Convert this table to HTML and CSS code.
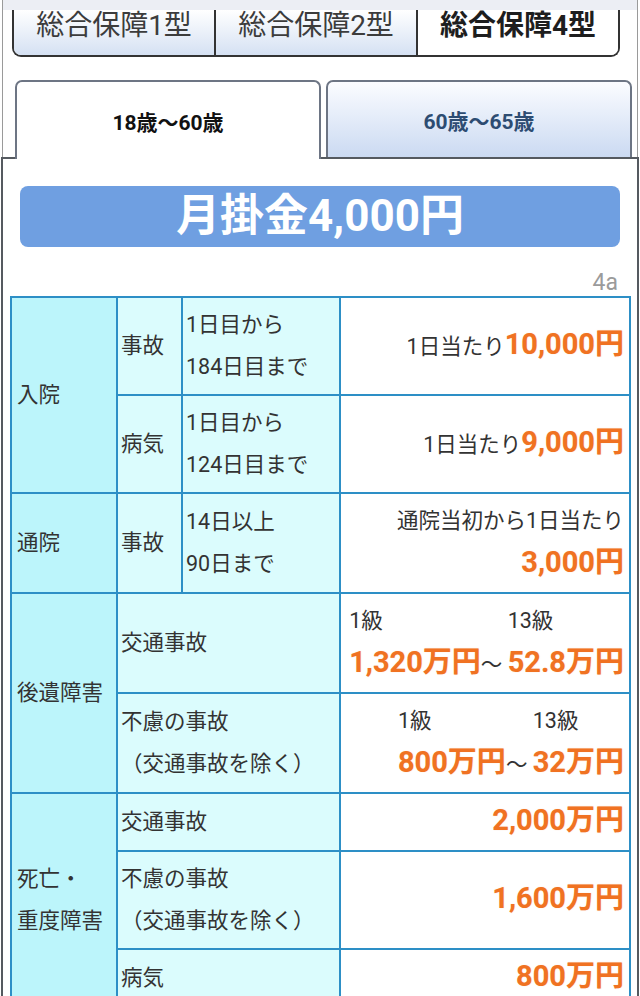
FILE: index.html
```html
<!DOCTYPE html>
<html lang="ja">
<head>
<meta charset="utf-8">
<title>総合保障4型</title>
<link rel="stylesheet" href="styles.css">
</head>
<body>
<div class="page">
  <div class="head">
    <div class="band"></div>
    <div class="plans">
      <div class="plan first">総合保障1型</div>
      <div class="plan">総合保障2型</div>
      <div class="plan on last">総合保障4型</div>
    </div>
    <div class="ages">
      <div class="age on">18歳～60歳</div>
      <div class="age">60歳～65歳</div>
    </div>
  </div>
  <div class="panel">
    <div class="banner">月掛金4,000円</div>
    <div class="code">4a</div>
    <table class="cover">
      <colgroup>
        <col class="c1"><col class="c2"><col class="c3"><col class="c4">
      </colgroup>
      <tr>
        <td class="k1" rowspan="2">入院</td>
        <td class="k2">事故</td>
        <td class="k2">1日目から<br>184日目まで</td>
        <td class="v">1日当たり<b>10,000円</b></td>
      </tr>
      <tr>
        <td class="k2">病気</td>
        <td class="k2">1日目から<br>124日目まで</td>
        <td class="v">1日当たり<b>9,000円</b></td>
      </tr>
      <tr>
        <td class="k1">通院</td>
        <td class="k2">事故</td>
        <td class="k2">14日以上<br>90日まで</td>
        <td class="v">通院当初から1日当たり<br><b>3,000円</b></td>
      </tr>
      <tr>
        <td class="k1" rowspan="2">後遺障害</td>
        <td class="k2" colspan="2">交通事故</td>
        <td class="v"><span class="g"><span class="lbl">1級</span><br><b>1,320万円</b></span>～&nbsp;<span class="g"><span class="lbl">13級</span><br><b>52.8万円</b></span></td>
      </tr>
      <tr>
        <td class="k2" colspan="2">不慮の事故<br>（交通事故を除く）</td>
        <td class="v"><span class="g"><span class="lbl">1級</span><br><b>800万円</b></span>～&nbsp;<span class="g"><span class="lbl">13級</span><br><b>32万円</b></span></td>
      </tr>
      <tr>
        <td class="k1" rowspan="3">死亡・<br>重度障害</td>
        <td class="k2" colspan="2">交通事故</td>
        <td class="v"><b>2,000万円</b></td>
      </tr>
      <tr>
        <td class="k2" colspan="2">不慮の事故<br>（交通事故を除く）</td>
        <td class="v"><b>1,600万円</b></td>
      </tr>
      <tr>
        <td class="k2" colspan="2">病気</td>
        <td class="v"><b>800万円</b></td>
      </tr>
    </table>
  </div>
</div>
</body>
</html>
```

FILE: styles.css
```css
html, body {
  margin: 0;
  padding: 0;
  background: #fff;
}

body {
  font-family: Roboto, "Noto Sans CJK JP", sans-serif;
  color: #333;
}

.page {
  margin: 0 1px;
}

.head {
  margin: 0 1px;
  border-left: 1px solid #9a9a9a;
  border-right: 1px solid #9a9a9a;
}

.band {
  height: 10px;
  background: #eceef4;
}

.plans {
  display: flex;
  margin-left: 9px;
  width: 608px;
  box-sizing: border-box;
  height: 47px;
  border: 2px solid #333;
  border-top: none;
  border-radius: 0 0 9px 9px;
}

.plan {
  flex: 1;
  text-align: center;
  font-size: 28px;
  line-height: 32px;
  color: #3c3c3c;
  background: linear-gradient(#ffffff, #d5e1f3);
}

.plan.first {
  border-radius: 0 0 0 7px;
}

.plan.last {
  border-radius: 0 0 7px 0;
}

.plan + .plan {
  border-left: 2px solid #333;
}

.plan.on {
  background: #fff;
  color: #1e1e1e;
  font-weight: bold;
}

.ages {
  display: flex;
  gap: 5px;
  margin-top: 23px;
  padding: 0 5px 0 12px;
  align-items: flex-start;
}

.age {
  flex: 1;
  height: 77px;
  box-sizing: border-box;
  border: 2px solid #6d7584;
  border-bottom: none;
  border-radius: 7px 7px 0 0;
  display: flex;
  align-items: center;
  justify-content: center;
  font-size: 21px;
  font-weight: bold;
  color: #2d4c72;
  background: linear-gradient(#fbfcff, #cbdaf2);
}

.age.on {
  height: 79px;
  margin-bottom: -2px;
  background: #fff;
  color: #111;
  position: relative;
  z-index: 1;
}

.panel {
  border: 2px solid #555a60;
  padding: 27px 8px 0 7px;
  background: #fff;
}

.banner {
  margin: 0 9px 0 10px;
  height: 61px;
  line-height: 60px;
  border-radius: 8px;
  background: #6f9fe1;
  color: #fff;
  text-align: center;
  font-size: 44px;
  font-weight: bold;
}

.code {
  margin-top: 23px;
  padding-right: 11px;
  text-align: right;
  font-size: 23px;
  line-height: 26px;
  color: #9b9b9b;
}

.cover {
  width: 619px;
  border-collapse: collapse;
  table-layout: fixed;
  font-size: 21.5px;
  line-height: 42px;
}

.c1 { width: 106px; }
.c2 { width: 65px; }
.c3 { width: 158px; }
.c4 { width: 290px; }

.cover td {
  border: 2px solid #2d8fc6;
  padding: 6px 4px 6px 4px;
  vertical-align: middle;
  white-space: nowrap;
}

.cover td.k1 {
  background: #bcf5fb;
  padding-left: 5px;
}

.cover td.k2 {
  background: #dbfcfd;
  padding-left: 3px;
}

.cover td.v {
  background: #fff;
  text-align: right;
  padding-right: 5px;
}

.cover b {
  font-size: 29px;
  line-height: 40px;
  font-weight: bold;
  color: #f07222;
  text-shadow: 0 0 1px rgba(240, 114, 34, 0.35);
}

.g {
  display: inline-block;
  text-align: left;
}

.lbl {
  color: #333;
}
```
